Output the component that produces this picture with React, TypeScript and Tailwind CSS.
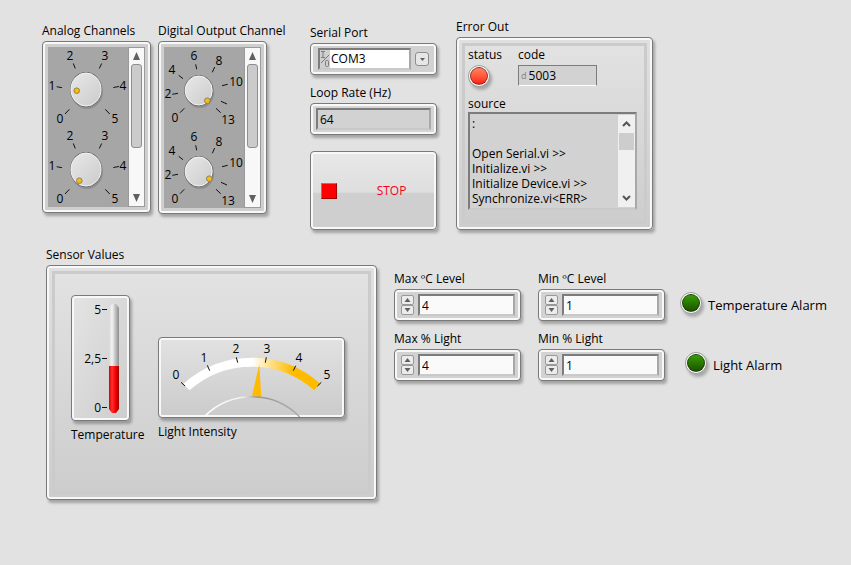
import { useState } from "react";
import type { ReactNode } from "react";

const frame =
  "rounded-[4px] border border-[#7a7a7a] shadow-[2px_3px_3px_rgba(0,0,0,0.28)] inset-shadow-[0_0_0_2px_#f8f8f8]";

function Label({ children, htmlFor }: { children: ReactNode; htmlFor?: string }) {
  const style = "block h-4 whitespace-nowrap text-xs leading-4";
  return htmlFor ? (
    <label htmlFor={htmlFor} className={style}>{children}</label>
  ) : (
    <div className={style}>{children}</div>
  );
}

type Mark = { text: string; x: number; y: number; tick: [number, number, number, number] };

const analogMarks: Mark[] = [
  { text: "0", x: 12, y: 72, tick: [21.3, 62.3, 17, 67] },
  { text: "1", x: 4, y: 39, tick: [8.7, 39.7, 14, 40.7] },
  { text: "2", x: 22, y: 9, tick: [25.3, 16.5, 27.3, 21.5] },
  { text: "3", x: 57, y: 9, tick: [53.7, 16.5, 51.3, 21.5] },
  { text: "4", x: 75, y: 39, tick: [71, 39.5, 65.3, 40.5] },
  { text: "5", x: 67, y: 72, tick: [57.3, 62.3, 61.7, 67] },
];

const digitalMarks: Mark[] = [
  { text: "0", x: 11, y: 71, tick: [20.3, 61.3, 16, 65.7] },
  { text: "2", x: 4, y: 47, tick: [8.3, 47.3, 14, 46.3] },
  { text: "4", x: 8, y: 23, tick: [14.7, 28.3, 19, 31.7] },
  { text: "6", x: 30, y: 9, tick: [31.7, 17.3, 32.7, 22.3] },
  { text: "8", x: 55, y: 14, tick: [50.7, 20, 48.3, 25.3] },
  { text: "10", x: 72, y: 35, tick: [63.7, 37.3, 58, 38.7] },
  { text: "", x: 0, y: 0, tick: [57, 54.3, 63, 57] },
  { text: "13", x: 64, y: 73, tick: [52, 61.3, 56.7, 65.7] },
];

function Scale({ marks }: { marks: Mark[] }) {
  return (
    <g>
      {marks.map((m) => (
        <g key={m.tick.join()}>
          <line x1={m.tick[0]} y1={m.tick[1]} x2={m.tick[2]} y2={m.tick[3]} stroke="#111" />
          {m.text && (
            <text x={m.x} y={m.y + 4} textAnchor="middle" fontSize="12">{m.text}</text>
          )}
        </g>
      ))}
    </g>
  );
}

type Knob = { cx: number; cy: number; rx: number; ry: number; dots: [number, number][]; pitch: number };

function DialBank({ title, marks, knob, height }: { title: string; marks: Mark[]; knob: Knob; height: number }) {
  return (
    <section className="flex w-[109px] flex-col gap-0.5">
      <Label>{title}</Label>
      <div className={`${frame} flex bg-[#cfcfcf] p-[5px]`}>
        <svg className="shrink-0 bg-[#a6a6a6]" width="80" height={height} role="img" aria-label={title}>
          <defs>
            <linearGradient id="knobFace" x1="0" y1="0" x2="1" y2="1">
              <stop offset="0" stopColor="#e8e8e8" />
              <stop offset="1" stopColor="#cbcbcb" />
            </linearGradient>
          </defs>
          {knob.dots.map(([dx, dy], i) => (
            <g key={dy} transform={`translate(0 ${i * knob.pitch})`}>
              <Scale marks={marks} />
              <ellipse cx={knob.cx + 1} cy={knob.cy + 2} rx={knob.rx} ry={knob.ry} fill="#000" opacity="0.15" />
              <ellipse cx={knob.cx} cy={knob.cy} rx={knob.rx} ry={knob.ry} fill="#6b6b6b" />
              <ellipse cx={knob.cx} cy={knob.cy} rx={knob.rx - 1} ry={knob.ry - 1} fill="url(#knobFace)" stroke="#f6f6f6" />
              <circle cx={dx} cy={dy} r="2.8" fill="#fb0" stroke="#8c8062" />
            </g>
          ))}
        </svg>
        <div className="flex w-[17px] flex-col items-center justify-between border border-[#9a9a9a] bg-[#f8f8f8] py-1">
          <svg width="9" height="8" viewBox="0 0 9 8"><path d="M4.5 0 8 8H1Z" fill="#606060" /></svg>
          <div className="mt-1 h-[84px] w-[11px] rounded-[3px] border border-[#8f8f8f] bg-[#cbcbcb]" />
          <svg className="mt-auto" width="9" height="8" viewBox="0 0 9 8"><path d="M4.5 8 8 0H1Z" fill="#606060" /></svg>
        </div>
      </div>
    </section>
  );
}

const sunken = "border-2 border-t-[#7c7c7c] border-l-[#7c7c7c] border-r-[#a8a8a8] border-b-[#c9c9c9]";

function NumericControl({ id, title, initial }: { id: string; title: string; initial: number }) {
  const [value, setValue] = useState(initial);
  const step = "flex h-[10px] w-[13px] items-center justify-center rounded-[2px] border border-[#999] bg-[#ececec]";
  return (
    <div className="flex w-[127px] flex-col gap-0.5">
      <Label htmlFor={id}>{title}</Label>
      <div className={`${frame} flex h-8 items-center gap-1 bg-[#d2d2d2] pr-[5px] pl-1.5`}>
        <div className="flex flex-col">
          <button className={step} aria-label={`Increase ${title}`} onClick={() => setValue(value + 1)}>
            <svg width="7" height="4" viewBox="0 0 7 4"><path d="M3.5 0 6.5 4H.5Z" fill="#606060" /></svg>
          </button>
          <button className={step} aria-label={`Decrease ${title}`} onClick={() => setValue(value - 1)}>
            <svg width="7" height="4" viewBox="0 0 7 4"><path d="M3.5 4 6.5 0H.5Z" fill="#606060" /></svg>
          </button>
        </div>
        <input
          id={id}
          className={`${sunken} h-[22px] min-w-0 flex-1 bg-[#fafafa] pl-0.5 text-xs`}
          value={value}
          onChange={(e) => setValue(Number(e.target.value) || 0)}
        />
      </div>
    </div>
  );
}

function Led({ on }: { on: "red" | "green" }) {
  const fill = on === "red" ? "from-[#ff8060] to-[#ff1408]" : "from-[#36a000] to-[#1c5200]";
  return (
    <span className="block size-[22px] shrink-0 rounded-full border border-[#9a9a9a] bg-white p-px shadow-[2px_3px_3px_rgba(0,0,0,0.25)]">
      <span className={`block size-full rounded-full border border-black/40 bg-linear-to-b ${fill}`} />
    </span>
  );
}

function Thermometer() {
  return (
    <figure className="flex w-[59px] flex-col gap-1.5">
      <div className={`${frame} bg-linear-to-br from-[#e4e4e4] to-[#cdcdcd]`}>
        <svg className="block" width="57" height="124" viewBox="1 1 57 124" role="img" aria-label="Temperature">
          <defs>
            <linearGradient id="glass">
              <stop offset="0" stopColor="#d8d8d8" />
              <stop offset="0.3" stopColor="#f4f4f4" />
              <stop offset="1" stopColor="#8c8c8c" />
            </linearGradient>
            <linearGradient id="mercury">
              <stop offset="0" stopColor="#d80000" />
              <stop offset="0.3" stopColor="#ff3030" />
              <stop offset="0.65" stopColor="#f80000" />
              <stop offset="1" stopColor="#9c0000" />
            </linearGradient>
          </defs>
          <path d="M38 71V13L41 9H45L48 13V71Z" fill="url(#glass)" />
          <path d="M38 71H48V114L45 118H41L38 114Z" fill="url(#mercury)" />
          <g fontSize="12" textAnchor="end">
            <text x="30" y="19">5</text>
            <text x="30" y="68">2,5</text>
            <text x="30" y="117">0</text>
          </g>
          <path d="M31 14.5H36M31 63.5H36M31 112.5H36" stroke="#111" />
        </svg>
      </div>
      <figcaption className="h-4 whitespace-nowrap text-xs leading-4">Temperature</figcaption>
    </figure>
  );
}

const meterMarks: Mark[] = [
  { text: "0", x: 18, y: 38, tick: [23, 45.3, 27, 49] },
  { text: "1", x: 46, y: 21, tick: [49.3, 28.3, 51.7, 33.7] },
  { text: "2", x: 78, y: 12, tick: [78.3, 20.3, 79.7, 25.7] },
  { text: "3", x: 109, y: 12, tick: [108.3, 20.3, 107.3, 25.7] },
  { text: "4", x: 141, y: 21, tick: [137.7, 28.7, 135.3, 33.7] },
  { text: "5", x: 169, y: 38, tick: [163.3, 45.3, 159.5, 49] },
];

function LightMeter() {
  return (
    <figure className="flex w-[187px] flex-col gap-1.5">
      <div className={`${frame} bg-linear-to-b from-[#e2e2e2] to-[#cbcbcb]`}>
        <svg className="block" width="185" height="79" viewBox="1 1 185 79" role="img" aria-label="Light Intensity">
          <defs>
            <linearGradient id="band" gradientUnits="userSpaceOnUse" x1="95" y1="0" x2="135" y2="0">
              <stop offset="0" stopColor="#fff" />
              <stop offset="0.15" stopColor="#fff3d0" />
              <stop offset="1" stopColor="#fb0" />
            </linearGradient>
            <linearGradient id="hub">
              <stop offset="0" stopColor="#fff" />
              <stop offset="0.4" stopColor="#f0f0f0" />
              <stop offset="0.55" stopColor="#999" />
              <stop offset="1" stopColor="#aaa" />
            </linearGradient>
          </defs>
          <path d="M28.5 50A98.7 98.7 0 0 1 159.2 50" fill="none" stroke="url(#band)" strokeWidth="9" />
          <Scale marks={meterMarks} />
          <path d="M101.3 27.3 103.3 61 93.7 60Z" fill="#fb0" />
          <path d="M46 80A66.7 66.7 0 0 1 141.7 80" fill="none" stroke="url(#hub)" strokeWidth="1.5" />
        </svg>
      </div>
      <figcaption className="h-4 whitespace-nowrap text-xs leading-4">Light Intensity</figcaption>
    </figure>
  );
}

const cluster = `${frame} bg-linear-to-b from-[#e0e0e0] to-[#cdcdcd] p-[5px]`;
const clusterFace = "size-full border-3 border-[#cbcbcb] bg-linear-to-b from-[#e2e2e2] to-[#cdcdcd]";

const errorSource = ":\n\nOpen Serial.vi >>\nInitialize.vi >>\nInitialize Device.vi >>\nSynchronize.vi<ERR>";

export default function App() {
  return (
    <main className="min-h-screen bg-[#e2e2e2] pt-[18px] pb-8 pl-[42px] font-['Open_Sans','Noto_Sans',sans-serif] text-xs text-black">
      <div className="flex items-start">
        <div className="flex items-start gap-[7px] pt-[5px]">
          <DialBank
            title="Analog Channels"
            marks={analogMarks}
            height={160}
            knob={{ cx: 38, cy: 42.5, rx: 16, ry: 17.5, pitch: 80, dots: [[28.7, 43.7], [31.3, 53.7]] }}
          />
          <DialBank
            title="Digital Output Channel"
            marks={digitalMarks}
            height={161}
            knob={{ cx: 34.7, cy: 43.5, rx: 14.5, ry: 15.5, pitch: 81, dots: [[43.3, 53.7], [45.3, 50.7]] }}
          />
        </div>

        <div className="ml-[43px] flex w-[127px] flex-col pt-[7px]">
          <Label htmlFor="port">Serial Port</Label>
          <div className={`${frame} mt-0.5 mb-2.5 flex h-8 items-center gap-1 bg-[#d2d2d2] px-[7px]`}>
            <div className={`${sunken} flex h-[22px] min-w-0 flex-1 bg-white`}>
              <svg className="shrink-0 bg-[#cfcfcf]" width="10" height="18" aria-hidden="true">
                <path d="M1 1.5H5M3 1.5V7.5M1 7.5H5M9 5 1 13" fill="none" stroke="#7b7b7b" />
                <rect x="5.5" y="10.5" width="3" height="6" rx="1" fill="none" stroke="#7b7b7b" />
              </svg>
              <select id="port" className="min-w-0 flex-1 appearance-none bg-transparent pl-px text-xs leading-4">
                <option>COM3</option>
              </select>
            </div>
            <span className="flex size-[14px] items-center justify-center rounded-[3px] border border-[#8e8e8e] bg-[#e6e6e6]">
              <svg width="5" height="3" viewBox="0 0 5 3"><path d="M0 0H5L2.5 3Z" fill="#606060" /></svg>
            </span>
          </div>

          <Label htmlFor="rate">Loop Rate (Hz)</Label>
          <div className={`${frame} mt-0.5 mb-4 flex h-8 items-center bg-[#d6d6d6] px-[5px]`}>
            <input
              id="rate"
              readOnly
              value="64"
              className={`${sunken} h-[22px] w-full bg-[#d2d2d2] pl-0.5 text-xs`}
            />
          </div>

          <button
            className={`${frame} flex h-[79px] items-center bg-linear-to-b from-[#e8e8e8] from-0% via-[#dedede] via-52% to-[#cfcfcf] to-54% pl-[10px]`}
          >
            <span className="size-4 border border-t-[#ff5050] border-r-[#a00000] border-b-[#a00000] border-l-[#ff5050] bg-[#f00]" />
            <span className="flex-1 pl-[10px] text-center text-[#f5001a]">STOP</span>
          </button>
        </div>

        <section className="ml-[19px] flex w-[197px] flex-col gap-0.5 pt-px">
          <Label>Error Out</Label>
          <div className={`${cluster} h-[193px]`}>
            <div className={`${clusterFace} pt-px pl-[3px]`}>
              <div className="flex gap-4">
                <div className="flex flex-col gap-0.5">
                  <Label>status</Label>
                  <Led on="red" />
                </div>
                <div className="flex flex-col gap-0.5">
                  <Label htmlFor="code">code</Label>
                  <div className="flex h-[21px] w-[79px] items-center border border-t-[#7c7c7c] border-r-[#7c7c7c] border-b-white border-l-[#7c7c7c] bg-[#d2d2d2] pl-0.5">
                    <span className="text-[9px] text-[#808080]">d</span>
                    <input id="code" readOnly value="5003" className="w-16 bg-transparent pl-0.5 text-xs" />
                  </div>
                </div>
              </div>
              <div className="mt-[9px] flex w-[169px] flex-col">
                <Label htmlFor="source">source</Label>
                <div className={`${sunken} flex h-[98px] bg-[#d2d2d2]`}>
                  <textarea
                    id="source"
                    readOnly
                    value={errorSource}
                    className="h-full min-w-0 flex-1 resize-none overflow-hidden pt-0.5 pl-0.5 text-xs leading-[15px] whitespace-pre"
                  />
                  <div className="my-px flex w-[17px] flex-col items-center bg-[#f0f0f0] py-1.5">
                    <svg width="9" height="6" viewBox="0 0 9 6"><path d="M1 5 4.5 1.5 8 5" fill="none" stroke="#555" strokeWidth="2" /></svg>
                    <div className="mt-1.5 h-[17px] w-[15px] bg-[#cdcdcd]" />
                    <svg className="mt-auto" width="9" height="6" viewBox="0 0 9 6"><path d="M1 1 4.5 4.5 8 1" fill="none" stroke="#555" strokeWidth="2" /></svg>
                  </div>
                </div>
              </div>
            </div>
          </div>
        </section>
      </div>

      <div className="mt-[17px] flex items-start pl-1">
        <section className="flex w-[331px] flex-col gap-0.5">
          <Label>Sensor Values</Label>
          <div className={`${cluster} h-[235px]`}>
            <div className={`${clusterFace} flex items-start gap-7 pt-px pl-4`}>
              <div className="pt-5"><Thermometer /></div>
              <div className="pt-[62px]"><LightMeter /></div>
            </div>
          </div>
        </section>

        <div className="ml-[17px] grid grid-cols-[127px_127px] gap-x-[17px] gap-y-2.5 pt-6">
          <NumericControl id="maxC" title="Max ºC Level" initial={4} />
          <NumericControl id="minC" title="Min ºC Level" initial={1} />
          <NumericControl id="maxLight" title="Max % Light" initial={4} />
          <NumericControl id="minLight" title="Min % Light" initial={1} />
        </div>

        <div className="ml-[15px] flex flex-col gap-9 pt-[45px] text-[13px] leading-5 whitespace-nowrap">
          <div className="flex h-6 gap-1.5">
            <Led on="green" />
            <span className="pt-[3px]">Temperature Alarm</span>
          </div>
          <div className="flex h-6 gap-1.5 pl-[5px]">
            <Led on="green" />
            <span className="pt-[3px]">Light Alarm</span>
          </div>
        </div>
      </div>
    </main>
  );
}
